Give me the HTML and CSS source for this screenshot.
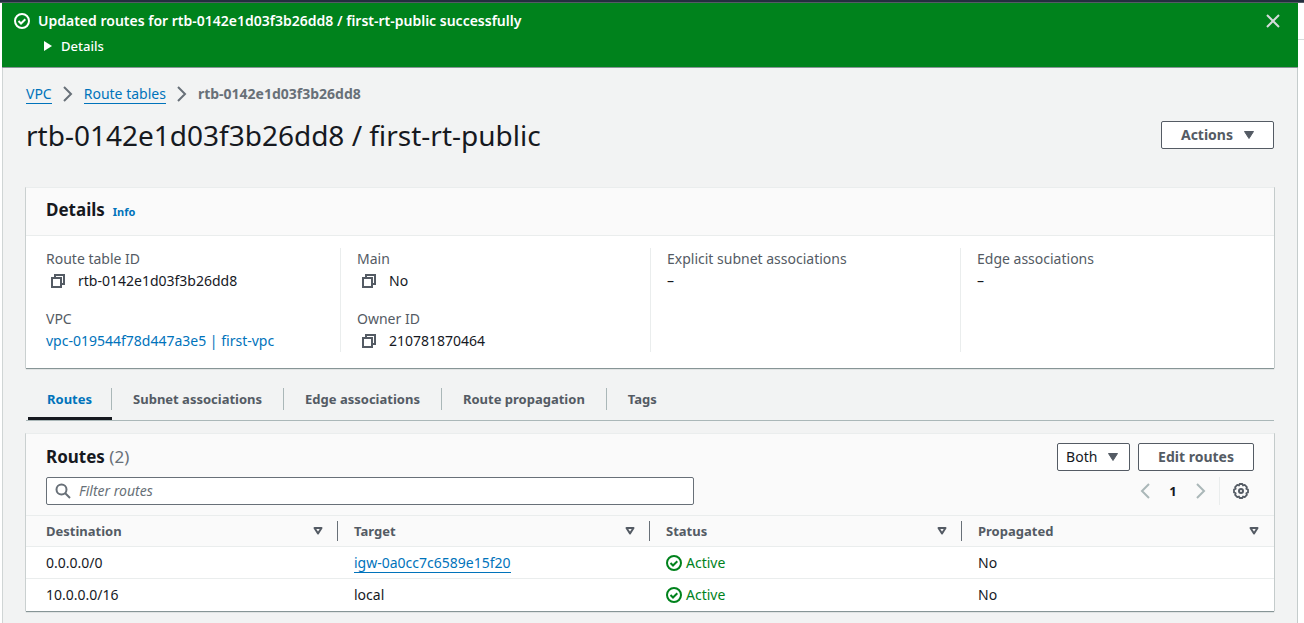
FILE: index.html
```html
<!DOCTYPE html>
<html lang="en">
<head>
<meta charset="utf-8">
<title>Route table details</title>
<link rel="stylesheet" href="styles.css">
</head>
<body>
<svg class="sprite" width="0" height="0" aria-hidden="true">
  <symbol id="check" viewBox="0 0 16 16"><circle cx="8" cy="8" r="7" fill="none" stroke="currentColor" stroke-width="2"/><path d="M4.5 8l2.500 2.500 4.300-4.300" fill="none" stroke="currentColor" stroke-width="2"/></symbol>
  <symbol id="copy" viewBox="0 0 16 16"><path d="M2 5h9v9H2z M5 5V2h9v9h-3" fill="none" stroke="currentColor" stroke-width="2"/></symbol>
  <symbol id="chevron" viewBox="0 0 16 16"><path d="M4 1l7 7-7 7" fill="none" stroke="currentColor" stroke-width="2"/></symbol>
  <symbol id="chevron-left" viewBox="0 0 16 16"><path d="M12 1L5 8l7 7" fill="none" stroke="currentColor" stroke-width="2"/></symbol>
  <symbol id="caret" viewBox="0 0 16 16"><path d="M3.500 4.500h9l-4.500 7z" fill="currentColor" stroke="currentColor" stroke-width="1" stroke-linejoin="round"/></symbol>
  <symbol id="sort" viewBox="0 0 16 16"><path d="M4.500 5h7L8 10.500z" fill="none" stroke="currentColor" stroke-width="2" stroke-linejoin="round"/></symbol>
</svg>
<div class="topbar"></div>
<div class="shell">
  <main class="main">
    <section class="flash" role="status">
      <svg class="icon"><use href="#check"/></svg>
      <div class="flash-body">
        <div class="flash-title">Updated routes for rtb-0142e1d03f3b26dd8 / first-rt-public successfully</div>
        <button class="flash-toggle" type="button"><svg class="flash-arrow" viewBox="0 0 10 12"><path d="M1 1v10l8-5z" fill="currentColor"/></svg>Details</button>
      </div>
      <button class="icon-button flash-close" type="button" aria-label="Dismiss"><svg class="icon" viewBox="0 0 16 16"><path d="M2 2l12 12M14 2L2 14" stroke="currentColor" stroke-width="2"/></svg></button>
    </section>
    <div class="content">
      <nav class="crumbs" aria-label="Breadcrumbs">
        <a class="underlined" href="#">VPC</a>
        <svg class="icon"><use href="#chevron"/></svg>
        <a class="underlined" href="#">Route tables</a>
        <svg class="icon"><use href="#chevron"/></svg>
        <span class="crumb-current">rtb-0142e1d03f3b26dd8</span>
      </nav>
      <header class="page-header">
        <h1>rtb-0142e1d03f3b26dd8 / first-rt-public</h1>
        <button class="button" type="button">Actions<svg class="icon"><use href="#caret"/></svg></button>
      </header>

      <section class="card">
        <header class="details-header"><h2>Details</h2><a class="info" href="#">Info</a></header>
        <div class="details">
          <dl class="details-col">
            <div><dt>Route table ID</dt><dd><button class="icon-button copy" type="button" aria-label="Copy route table ID"><svg class="icon"><use href="#copy"/></svg></button>rtb-0142e1d03f3b26dd8</dd></div>
            <div><dt>VPC</dt><dd><a href="#">vpc-019544f78d447a3e5 | first-vpc</a></dd></div>
          </dl>
          <dl class="details-col">
            <div><dt>Main</dt><dd><button class="icon-button copy" type="button" aria-label="Copy main"><svg class="icon"><use href="#copy"/></svg></button>No</dd></div>
            <div><dt>Owner ID</dt><dd><button class="icon-button copy" type="button" aria-label="Copy owner ID"><svg class="icon"><use href="#copy"/></svg></button>210781870464</dd></div>
          </dl>
          <dl class="details-col"><div><dt>Explicit subnet associations</dt><dd>–</dd></div></dl>
          <dl class="details-col"><div><dt>Edge associations</dt><dd>–</dd></div></dl>
        </div>
      </section>

      <div class="tabs" role="tablist">
        <button class="tab active" type="button" role="tab" aria-selected="true"><span>Routes</span></button>
        <button class="tab" type="button" role="tab"><span>Subnet associations</span></button>
        <button class="tab" type="button" role="tab"><span>Edge associations</span></button>
        <button class="tab" type="button" role="tab"><span>Route propagation</span></button>
        <button class="tab" type="button" role="tab"><span>Tags</span></button>
      </div>

      <section class="card">
        <header class="routes-header">
          <div class="routes-row">
            <h2>Routes <span class="count">(2)</span></h2>
            <div class="actions">
              <div class="select">
                <select aria-label="Route filter"><option>Both</option></select>
                <svg class="icon"><use href="#caret"/></svg>
              </div>
              <button class="button" type="button">Edit routes</button>
            </div>
          </div>
          <div class="routes-row">
            <label class="search">
              <svg class="icon" viewBox="0 0 16 16"><circle cx="6.500" cy="6.500" r="5" fill="none" stroke="currentColor" stroke-width="2"/><path d="M10 10l5 5" stroke="currentColor" stroke-width="2"/></svg>
              <input type="text" placeholder="Filter routes" aria-label="Filter routes">
            </label>
            <div class="pager">
              <button class="icon-button page-arrow" type="button" aria-label="Previous page"><svg class="icon"><use href="#chevron-left"/></svg></button>
              <span class="page-number">1</span>
              <button class="icon-button page-arrow" type="button" aria-label="Next page"><svg class="icon"><use href="#chevron"/></svg></button>
              <div class="settings">
                <button class="icon-button" type="button" aria-label="Settings"><svg class="icon" viewBox="0 0 16 16" fill="none" stroke="currentColor"><path d="M6.600 1h2.800l.6 1.500 1.700-.6 2.200 2.200-.6 1.700 1.700.8v2.800l-1.700.8.6 1.700-2.200 2.200-1.700-.6L9.400 15H6.600l-.6-1.500-1.700.6-2.200-2.200.6-1.700L1 9.400V6.600l1.700-.8-.6-1.700 2.200-2.200 1.700.6z" stroke-width="1.800" stroke-linejoin="round"/><circle cx="8" cy="8" r="2" stroke-width="2"/></svg></button>
              </div>
            </div>
          </div>
        </header>
        <table class="table">
          <thead>
            <tr>
              <th scope="col"><div class="th">Destination<svg class="icon"><use href="#sort"/></svg></div></th>
              <th scope="col"><div class="th">Target<svg class="icon"><use href="#sort"/></svg></div></th>
              <th scope="col"><div class="th">Status<svg class="icon"><use href="#sort"/></svg></div></th>
              <th scope="col"><div class="th">Propagated<svg class="icon"><use href="#sort"/></svg></div></th>
            </tr>
          </thead>
          <tbody>
            <tr><td>0.0.0.0/0</td><td><a class="underlined" href="#">igw-0a0cc7c6589e15f20</a></td><td><span class="status"><svg class="icon"><use href="#check"/></svg>Active</span></td><td>No</td></tr>
            <tr><td>10.0.0.0/16</td><td>local</td><td><span class="status"><svg class="icon"><use href="#check"/></svg>Active</span></td><td>No</td></tr>
          </tbody>
        </table>
      </section>
    </div>
  </main>
  <aside class="rail"><div class="rail-head"></div></aside>
</div>
</body>
</html>
```
FILE: styles.css
```css
* { box-sizing: border-box; }
body {
  margin: 0;
  min-height: 100vh;
  display: flex;
  flex-direction: column;
  background: #fff;
  color: #16191f;
  font: 14px/22px "Noto Sans", "Open Sans", sans-serif;
}
h1, h2, dl, dd { margin: 0; }
button, input, select { font: inherit; color: inherit; }
a { color: #0073bb; text-decoration: none; }
.sprite { display: none; }
.icon { width: 16px; height: 16px; flex: none; display: block; }
.icon-button { display: flex; padding: 0; border: 0; background: none; color: #545b64; }
.underlined { display: inline-block; line-height: 18px; border-bottom: 1px solid #0073bb; }

.topbar { height: 3px; background: #232f3e; border-bottom: 1px solid #545b64; }
.shell { flex: 1; display: flex; padding-left: 2px; }
.main { flex: 1; min-width: 0; background: #f2f3f3; box-shadow: inset 1px 0 #d0d5d5, inset -1px 0 #c5cccc; }
.rail { width: 6px; }
.rail-head { height: 37px; border-bottom: 1px solid #d5dbdb; }

.flash {
  display: flex;
  gap: 8px;
  padding: 10px 17px 13px 12px;
  background: #00821c;
  border-bottom: 1px solid #879596;
  color: #fff;
  line-height: 16px;
}
.flash-body { flex: 1; }
.flash-title { font-weight: 600; }
.flash-toggle {
  display: flex;
  align-items: center;
  gap: 8px;
  margin-top: 9px;
  padding: 0 0 0 5px;
  border: 0;
  background: none;
  font-size: 13px;
  font-weight: 500;
}
.flash-arrow { width: 10px; height: 12px; }
.flash-close { color: #d5dbdb; height: 16px; }

.content { padding: 15px 24px 11px; }
.crumbs { display: flex; align-items: center; gap: 8px; color: #687078; }
.crumb-current { font-weight: 700; }
.page-header { display: flex; justify-content: space-between; align-items: center; margin-top: 12px; }
h1 { font-size: 28px; line-height: 36px; font-weight: 400; }
.button {
  display: flex;
  align-items: center;
  gap: 8px;
  height: 28px;
  padding: 0 19px;
  border: 1px solid #545b64;
  border-radius: 2px;
  background: #fff;
  color: #545b64;
  font-weight: 700;
}
.page-header .button { padding-right: 16px; }

.card {
  padding-bottom: 1px;
  background: #fff;
  border-top: 1px solid #eaeded;
  box-shadow: 0 1px 1px #879596, -1px 0 #d8dddd, 1px 0 #d0d6d6;
}
.page-header + .card { margin-top: 34px; }
h2 { font-size: 17px; line-height: 22px; font-weight: 700; }
.details-header {
  display: flex;
  align-items: baseline;
  gap: 8px;
  padding: 11px 20px 12px;
  background: #fafafa;
  border-bottom: 1px solid #eaeded;
}
.info { font-size: 11px; font-weight: 700; }
.details { display: grid; grid-template-columns: repeat(4, 1fr); padding: 12px 4px 15px; }
.details-col { display: flex; flex-direction: column; gap: 16px; padding: 0 16px; }
.details-col + .details-col { border-left: 1px solid #eaeded; }
dt { color: #545b64; }
dd { display: flex; align-items: center; }
.copy { margin: 0 12px 0 4px; }

.tabs { display: flex; align-items: flex-start; margin: 19px 0 12px; border-bottom: 1px solid #aab7b8; padding-left: 2px; }
.tab { height: 33px; padding: 0; border: 0; background: none; color: #545b64; font-size: 13px; font-weight: 700; }
.tab span { display: block; height: 22px; margin-bottom: 9px; padding: 0 21px; border-right: 1px solid #aab7b8; }
.tab:last-child span { border-right: 0; }
.tab.active { color: #0073bb; box-shadow: inset 0 -3px #16191f; }
.tab.active span { padding: 0 19px; }

.routes-header {
  display: flex;
  flex-direction: column;
  gap: 6px;
  padding: 9px 20px 10px;
  background: #fafafa;
}
.routes-row { display: flex; justify-content: space-between; align-items: center; }
.count { color: #687078; font-weight: 400; }
.actions { display: flex; gap: 8px; }
.select { display: grid; align-items: center; width: 73px; height: 28px; }
.select > * { grid-area: 1 / 1; }
.select select {
  appearance: none;
  width: 100%;
  height: 28px;
  padding: 0 8px;
  border: 1px solid #545b64;
  border-radius: 2px;
  background: #fff;
}
.select .icon { justify-self: end; margin-right: 9px; color: #545b64; pointer-events: none; }
.search {
  display: flex;
  align-items: center;
  gap: 8px;
  width: 648px;
  height: 28px;
  padding: 0 8px;
  border: 1px solid #687078;
  border-radius: 2px;
  background: #fff;
  color: #687078;
}
.search input { flex: 1; min-width: 0; padding: 0; border: 0; outline: 0; background: none; }
.search input::placeholder { color: #687078; opacity: 1; font-style: italic; }
.pager { display: flex; align-items: center; }
.page-arrow { color: #aab7b8; }
.page-number { width: 40px; text-align: center; font-size: 13px; font-weight: 700; }
.settings { display: flex; align-items: center; height: 28px; margin-left: 10px; padding: 0 5px 0 13px; border-left: 1px solid #eaeded; }

.table { width: 100%; table-layout: fixed; border-collapse: separate; border-spacing: 0; }
th { padding: 0; text-align: left; background: #fafafa; border-top: 1px solid #eaeded; color: #545b64; font-size: 13px; }
.th {
  display: flex;
  justify-content: space-between;
  align-items: center;
  height: 20px;
  margin: 5px 0;
  padding: 0 11px 0 16px;
  border-right: 1px solid #687078;
}
th:last-child .th { border-right: 0; padding-right: 12px; }
td { height: 32px; padding: 0 16px; border-top: 1px solid #eaeded; }
th:first-child .th, td:first-child { padding-left: 20px; }
.status { display: flex; align-items: center; gap: 4px; color: #00821c; }
```
